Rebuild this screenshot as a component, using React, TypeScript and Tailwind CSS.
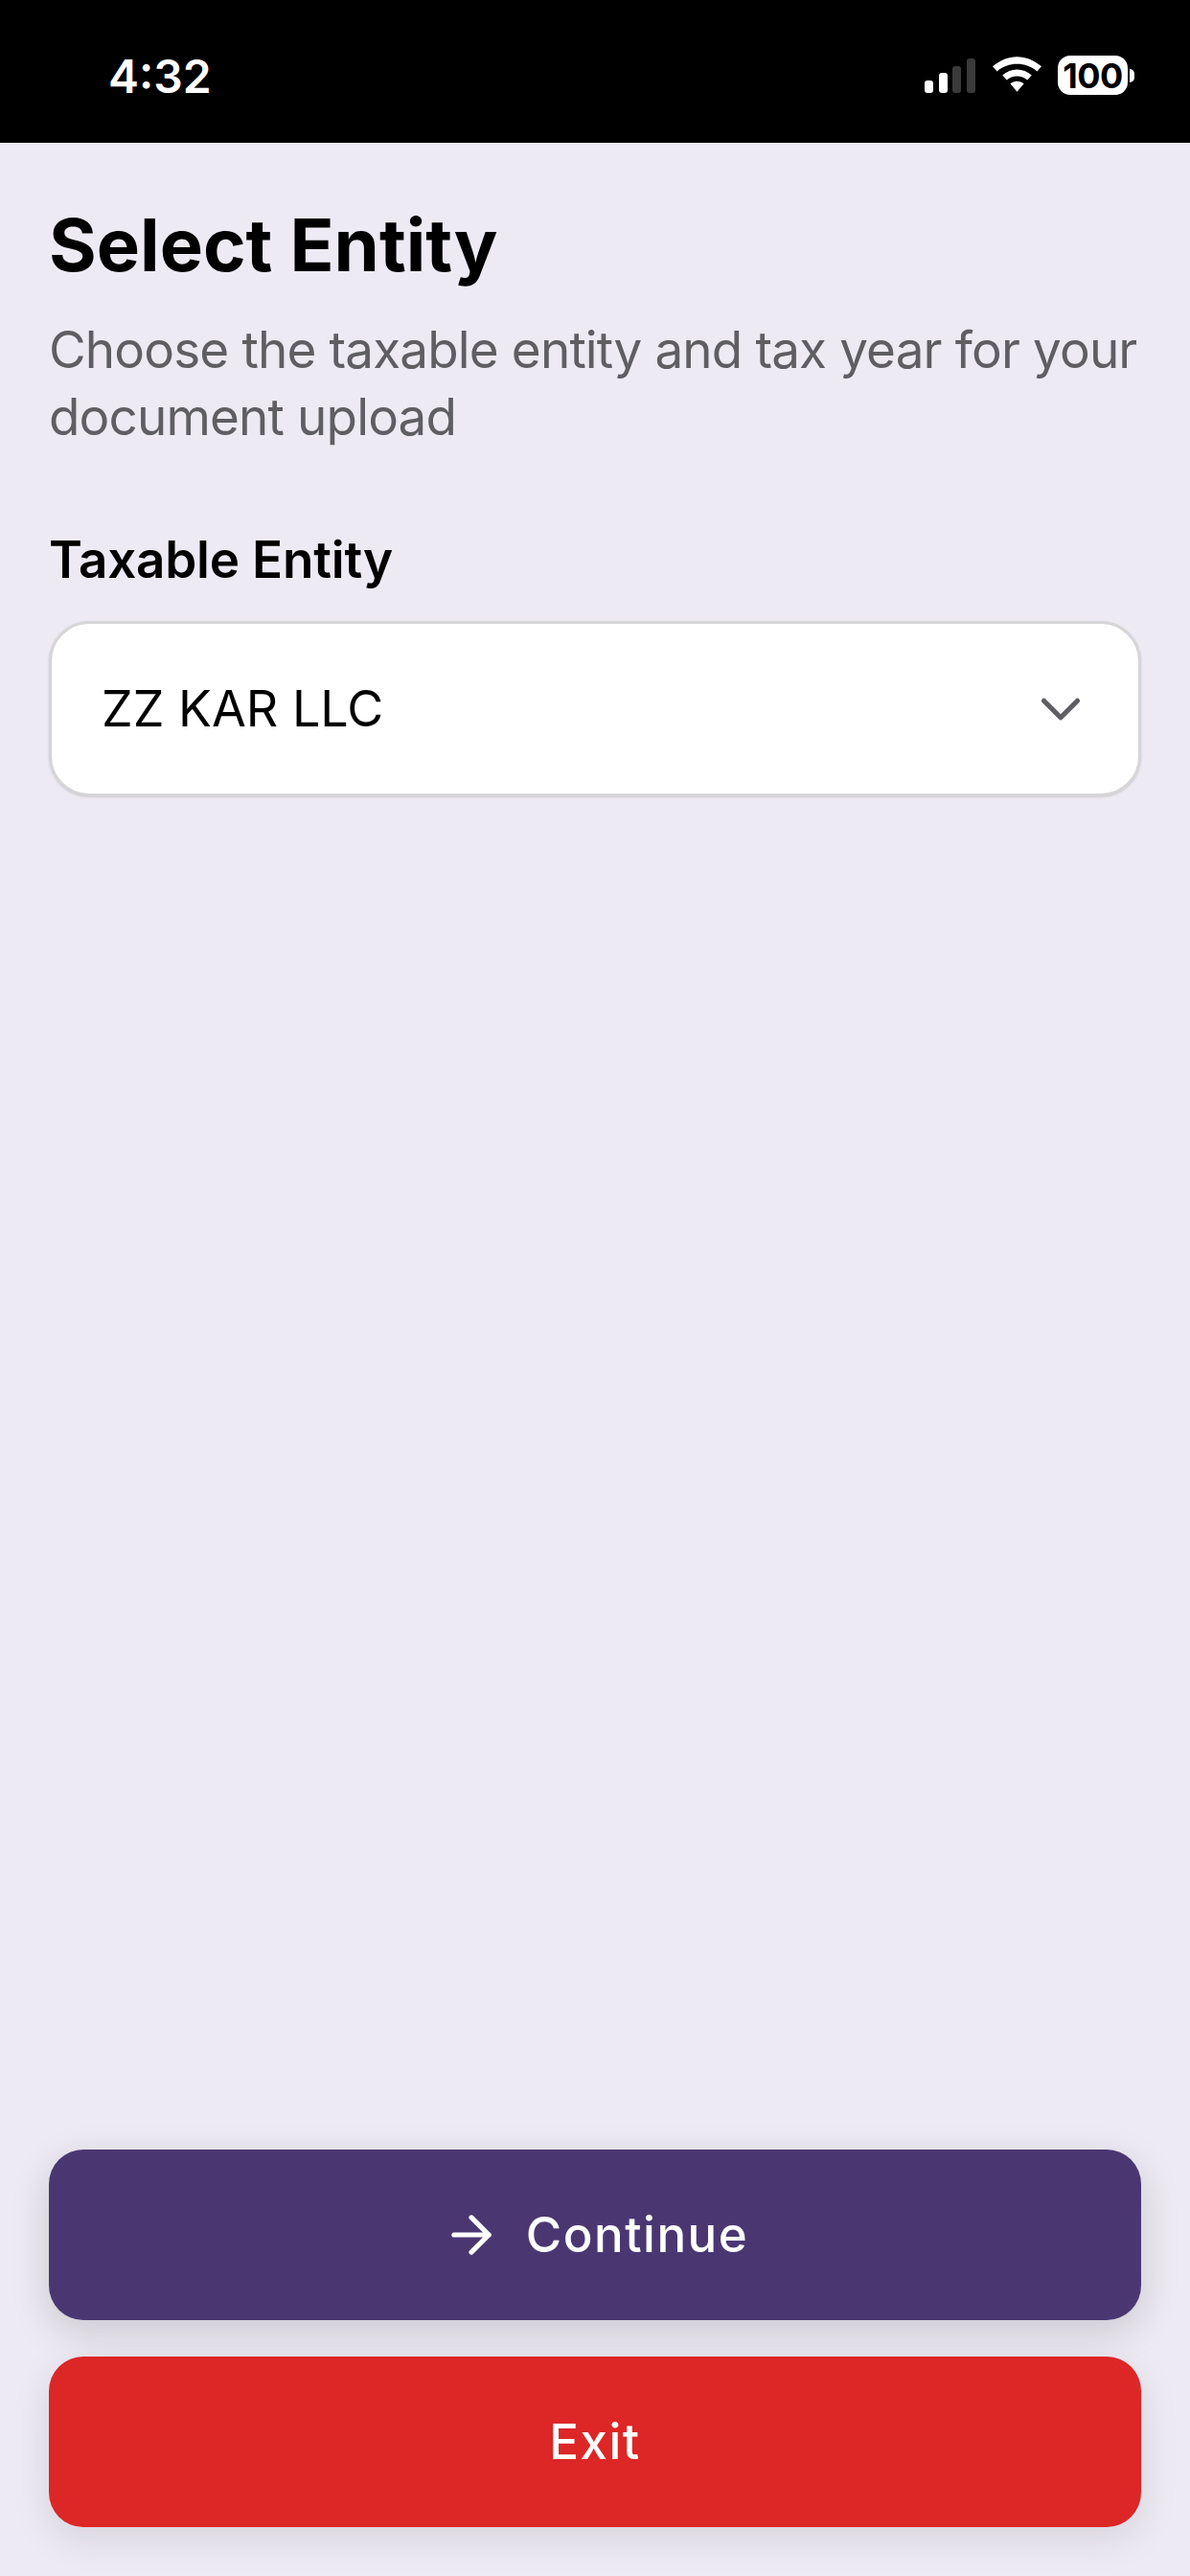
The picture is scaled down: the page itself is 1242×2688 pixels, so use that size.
import { ArrowRight, ChevronDown } from "lucide-react";

const StatusBar = () => {
  return (
    <div className="h-[149px] bg-black flex items-start justify-between pl-[113px] pr-[58px] pt-[51px]">
      <span className="text-[48px] leading-[58px] font-semibold text-white">4:32</span>
      <div className="flex items-end gap-[17px] pt-[7px]">
        <svg width="54" height="37" viewBox="0 0 54 37" className="mb-[2px]">
          <rect x="0" y="24" width="9" height="13" rx="3" fill="#fff" />
          <rect x="15" y="16" width="9" height="21" rx="3" fill="#fff" />
          <rect x="29" y="9" width="9" height="28" rx="3" fill="#3a3a3a" />
          <rect x="44" y="1" width="9" height="36" rx="3" fill="#3a3a3a" />
        </svg>
        <svg width="51" height="39" viewBox="0 0 50 38" className="mb-[2px]">
          <path d="M25 1C16 1 8 4.500 0 11L4.500 16C10.500 11 17.500 8.500 25 8.500C32.500 8.500 39.500 11 45.500 16L50 11C42 4.500 34 1 25 1Z" fill="#fff" />
          <path d="M25 14C19.500 14 14.500 16 10 20L14.500 25C17.500 22.500 21 21 25 21C29 21 32.500 22.500 35.500 25L40 20C35.500 16 30.500 14 25 14Z" fill="#fff" />
          <path d="M25 26C22.500 26 20 27 18 28.500L25 37L32 28.500C30 27 27.500 26 25 26Z" fill="#fff" />
        </svg>
        <div className="flex items-center gap-[2px]">
          <div className="w-[73px] h-[41px] rounded-[13px] bg-white flex items-center justify-center text-[36px] leading-none font-bold tracking-[-0.5px] text-black">
            100
          </div>
          <div className="w-[5px] h-[14px] rounded-r-full bg-white" />
        </div>
      </div>
    </div>
  );
};

const App = () => {
  return (
    <div className="min-h-[2688px] flex flex-col bg-[#edeaf3] font-['Inter',sans-serif]">
      <StatusBar />
      <div className="flex-1 flex flex-col px-[51px] pb-[51px]">
        <h1 className="mt-[59px] text-[76px] leading-[94px] font-bold text-black">Select Entity</h1>
        <p className="mt-[28px] text-[53px] leading-[70px] tracking-[-0.85px] text-[#5e5e63]">
          Choose the taxable entity and tax year for your document upload
        </p>
        <label className="mt-[81px] text-[53px] leading-[66px] font-semibold tracking-[-0.2px] text-black">Taxable Entity</label>
        <div className="mt-[31px] h-[183px] rounded-[42px] border-[3px] border-[#d6d5d8] bg-white shadow-sm flex items-center justify-between pl-[52px] pr-[46px]">
          <span className="text-[52px] leading-[66px] text-black">ZZ KAR LLC</span>
          <ChevronDown size={70} strokeWidth={1.8} className="text-[#5e5e63]" />
        </div>

        <div className="mt-auto flex flex-col gap-[38px]">
          <button className="h-[178px] rounded-[36px] bg-[#4a3772] shadow-[0_12px_40px_rgba(0,0,0,0.15)] flex items-center justify-center gap-[26px] text-white">
            <ArrowRight size={62} strokeWidth={2} />
            <span className="text-[51px] leading-[62px] font-[550] tracking-[1.5px]">Continue</span>
          </button>
          <button className="h-[178px] rounded-[36px] bg-[#dd2626] shadow-[0_12px_40px_rgba(0,0,0,0.1)] flex items-center justify-center text-white">
            <span className="text-[51px] leading-[62px] font-[550] tracking-[1.5px]">Exit</span>
          </button>
        </div>
      </div>
    </div>
  );
};

export default App;
